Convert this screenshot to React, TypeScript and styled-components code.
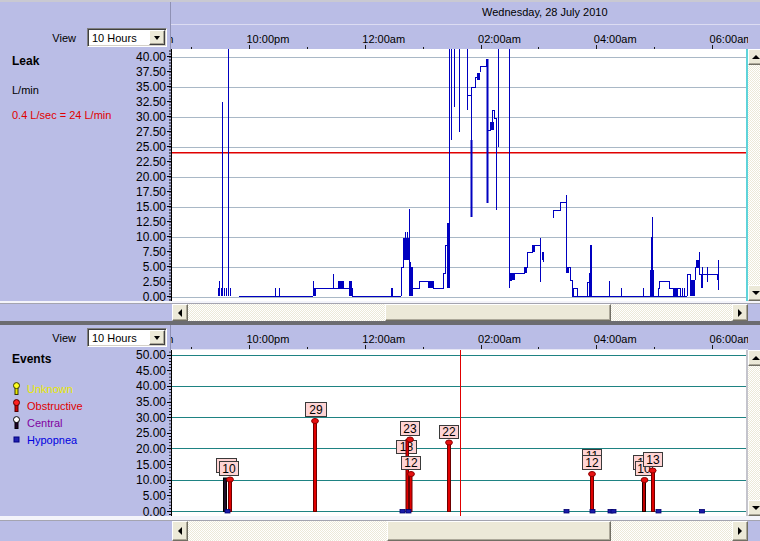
import React from "react";
import styled, { createGlobalStyle } from "styled-components";

const LAV = "#BABDE6";
const FACE = "#ECE9D8";
const CHECKER = `repeating-conic-gradient(${FACE} 0 25%, #ffffff 0 50%) 0 0 / 2px 2px`;
const FONT = `"Liberation Sans", Arial, sans-serif`;

const GlobalStyle = createGlobalStyle`
  html, body { margin: 0; padding: 0; background: ${LAV}; overflow: hidden; }
  #root { width: 760px; height: 541px; }
`;

const Screen = styled.div`
  width: 760px;
  height: 541px;
  overflow: hidden;
  display: flex;
  flex-direction: column;
  background: ${LAV};
  font-family: ${FONT};
  font-size: 11px;
  color: #000;
`;

const Strip = styled.div<{ $h: number; $c: string }>`
  flex: 0 0 ${(p) => p.$h}px;
  background: ${(p) => p.$c};
`;

const Header = styled.div<{ $h: number }>`
  flex: 0 0 ${(p) => p.$h}px;
  display: grid;
  grid-template-columns: 171px 1fr;
  min-height: 0;
`;

const ViewCell = styled.div`
  border-right: 1px solid #8f91b4;
  display: flex;
  align-items: flex-end;
  justify-content: flex-end;
  padding: 0 3px 3px 0;
`;

const ViewRow = styled.div`
  display: flex;
  align-items: center;
  gap: 11px;
`;

const Select = styled.div`
  width: 80px;
  height: 19px;
  box-sizing: border-box;
  background: #fff;
  border: 1px solid;
  border-color: #808080 #ffffff #ffffff #808080;
  box-shadow: inset 1px 1px 0 #404040, inset -1px -1px 0 #d4d0c8;
  display: flex;
  align-items: center;
  justify-content: space-between;
  padding: 1px 1px 1px 4px;
  font-size: 11px;
`;

const DropBtn = styled.div`
  width: 16px;
  height: 15px;
  box-sizing: border-box;
  background: ${FACE};
  border: 1px solid;
  border-color: #ffffff #404040 #404040 #ffffff;
  box-shadow: inset -1px -1px 0 #aca899;
  display: flex;
  align-items: center;
  justify-content: center;
  &::before {
    content: "";
    border-left: 3.5px solid transparent;
    border-right: 3.5px solid transparent;
    border-top: 4px solid #000;
  }
`;

const AxisHead = styled.div`
  display: flex;
  flex-direction: column;
  min-width: 0;
`;

const DateRow = styled.div`
  flex: 0 0 23px;
  box-sizing: border-box;
  border-bottom: 1px solid #dcdcf2;
  padding-left: 311px;
  line-height: 21px;
  white-space: nowrap;
`;

const TimeRow = styled.div`
  flex: 1 1 auto;
  box-sizing: border-box;
  border-bottom: 1px solid #e6e6f4;
  margin-right: 12px;
  overflow: hidden;
  display: flex;
`;

const TimeTrack = styled.div`
  display: flex;
  margin-left: -37.8px;
`;

const HourCell = styled.div`
  flex: 0 0 57.9px;
  display: flex;
  flex-direction: column;
  align-items: flex-start;
  padding-top: 8px;
  box-sizing: border-box;
`;

const HourLabel = styled.span`
  height: 12px;
  line-height: 12px;
  margin-left: -2.5px;
  white-space: nowrap;
`;

const HourTick = styled.span<{ $major: boolean }>`
  margin-top: auto;
  width: 1px;
  height: ${(p) => (p.$major ? 4 : 2)}px;
  background: #1a1a1a;
`;

const Body = styled.div<{ $h: number }>`
  flex: 0 0 ${(p) => p.$h}px;
  display: grid;
  grid-template-columns: 130px 42px 576px 1fr;
  overflow: hidden;
`;

const Info = styled.div<{ $pt: number }>`
  padding: ${(p) => p.$pt}px 0 0 12px;
  display: flex;
  flex-direction: column;
`;

const Title = styled.div`
  font-weight: bold;
  font-size: 12px;
  line-height: 14px;
`;

const InfoLine = styled.div<{ $color?: string; $mt: number }>`
  margin-top: ${(p) => p.$mt}px;
  color: ${(p) => p.$color || "#000"};
  line-height: 14px;
  white-space: nowrap;
`;

const Legend = styled.div`
  margin-top: 14px;
  display: flex;
  flex-direction: column;
`;

const LegendRow = styled.div<{ $color: string }>`
  height: 17px;
  display: flex;
  align-items: center;
  gap: 6px;
  color: ${(p) => p.$color};
  svg { display: block; flex: 0 0 auto; }
`;

const Axis = styled.div`
  border-right: 1px solid #000;
  overflow: hidden;
`;

const AxisList = styled.div<{ $offset: number; $minor: number; $phase: number }>`
  margin-top: ${(p) => p.$offset}px;
  background-image: linear-gradient(to bottom, #000 0 1px, transparent 1px);
  background-size: 2px ${(p) => p.$minor}px;
  background-repeat: repeat-y;
  background-position: right 0 top ${(p) => p.$phase}px;
`;

const AxisLabel = styled.div<{ $slot: number }>`
  height: ${(p) => p.$slot}px;
  display: flex;
  align-items: center;
  justify-content: flex-end;
  gap: 1px;
  font-size: 12px;
  line-height: 1;
  &::after {
    content: "";
    width: 4px;
    height: 1px;
    background: #000;
  }
`;

const ChartBox = styled.div<{ $edge: string }>`
  background: #fff;
  border-right: 2px solid ${(p) => p.$edge};
  overflow: hidden;
  svg { display: block; }
`;

const VScroll = styled.div`
  overflow: hidden;
  display: flex;
  flex-direction: column;
  justify-content: space-between;
  background: ${CHECKER};
`;

type Dir = "left" | "right" | "up" | "down";

const arrowCss = (d: Dir) => {
  switch (d) {
    case "left":
      return "border-top: 4px solid transparent; border-bottom: 4px solid transparent; border-right: 4px solid #000;";
    case "right":
      return "border-top: 4px solid transparent; border-bottom: 4px solid transparent; border-left: 4px solid #000;";
    case "up":
      return "border-left: 4px solid transparent; border-right: 4px solid transparent; border-bottom: 4px solid #000;";
    default:
      return "border-left: 4px solid transparent; border-right: 4px solid transparent; border-top: 4px solid #000;";
  }
};

const ArrowBtn = styled.div<{ $dir: Dir; $w: number; $h: number }>`
  flex: 0 0 auto;
  width: ${(p) => p.$w}px;
  height: ${(p) => p.$h}px;
  box-sizing: border-box;
  background: ${FACE};
  border: 1px solid;
  border-color: #ffffff #716f64 #716f64 #ffffff;
  box-shadow: inset -1px -1px 0 #aca899;
  display: flex;
  align-items: center;
  justify-content: center;
  &::before {
    content: "";
    ${(p) => arrowCss(p.$dir)}
  }
`;

const HScrollRow = styled.div<{ $h: number }>`
  flex: 0 0 ${(p) => p.$h}px;
  display: grid;
  grid-template-columns: 172px 576px 1fr;
  overflow: hidden;
`;

const HTrack = styled.div`
  display: flex;
  align-items: stretch;
  background: ${CHECKER};
`;

const Thumb = styled.div<{ $left: number; $w: number }>`
  margin-left: ${(p) => p.$left}px;
  width: ${(p) => p.$w}px;
  box-sizing: border-box;
  background: ${FACE};
  border: 1px solid;
  border-color: #ffffff #716f64 #716f64 #ffffff;
  box-shadow: inset -1px -1px 0 #aca899;
`;

const Spacer = styled.div`
  flex: 1 1 auto;
`;

/* ---------- time axis ---------- */
const HOURS = ["08:00pm", "", "10:00pm", "", "12:00am", "", "02:00am", "", "04:00am", "", "06:00am"];

const TimeAxis = () => (
  <TimeRow>
    <TimeTrack>
      {HOURS.map((h, i) => (
        <HourCell key={i}>
          <HourLabel>{h}</HourLabel>
          <HourTick $major={i % 2 === 0} />
        </HourCell>
      ))}
    </TimeTrack>
  </TimeRow>
);

const ViewPicker = () => (
  <ViewCell>
    <ViewRow>
      <span>View</span>
      <Select>
        <span>10 Hours</span>
        <DropBtn />
      </Select>
    </ViewRow>
  </ViewCell>
);

/* ---------- leak chart ---------- */
const LEAK_LABELS = Array.from({ length: 17 }, (_, i) => (40 - i * 2.5).toFixed(2));
const EVENT_LABELS = Array.from({ length: 11 }, (_, i) => (50 - i * 5).toFixed(2));

const LEAK_PATH = [
  "M218 296V288 M219.5 296V281 M221 296V288 M222.5 296V102 M224.5 296V288 M226 296V288 M228.5 296V49 M230 296V288",
  "M239 296H313 M275 296V288 M279 296V288",
  "M313 296V281 M313 288H333V274 M333 288H352V296",
  "M352 296H401 M391 296V288H392V296",
  "M401 296V267H403V238 M405 250V232 M407 260V232 M409 296V209 M410.5 296V262 M412 296V268",
  "M413 288H419V281H433V288H443V273H445V245H447V223 M449.5 288V49",
  "M451.5 49V140 M454 49V107 M459.5 49V132 M467.5 49V110 M467 95H471.5V217 M471.5 95V87H475V77H478 M480 72V66H486V59H487.5",
  "M488 130H490V122H492V110H494V118H496V130V210 M498.5 49V147 M509.5 49V288",
  "M509 288V280H511V273H524V267H527V252H532V245H540V238 M540.5 238V282 M542.5 252V260 M543.5 252V262",
  "M553 218V210H560V202H566V195 M566.5 195V267H570V280H572V296 M573 296V288H577V296",
  "M572 296H687 M587 296V282H590V245 M591 296V245 M609 296V281 M621 296V288 M643 296V288",
  "M650 296V270 M651.5 296V237 M652.5 296V217 M653.5 296V270",
  "M658 296V288H659V281H669V288H680V296 M682 296V288 M684 296V288",
  "M687 296V274H690V280 M695 280V267H699V252V274H718 M701 274V288 M702 288V267 M707 267V282 M717 274V280 M718.5 260V290",
].join(" ");

const LEAK_BLOCKS: [number, number, number, number][] = [
  [313, 288, 316, 296],
  [338, 281, 344, 288],
  [349, 281, 352, 296],
  [403, 238, 409, 260],
  [409, 267, 413, 296],
  [428, 281, 433, 288],
  [447, 223, 449, 288],
  [470.5, 140, 472.5, 217],
  [477, 73, 480, 80],
  [486.5, 59, 488.5, 203],
  [490, 122, 494, 130],
  [510, 273, 515, 280],
  [524, 267, 527, 273],
  [532, 245, 535, 252],
  [566, 267, 569, 273],
  [589, 273, 592, 296],
  [651, 270, 653, 296],
  [673, 288, 678, 296],
  [690, 280, 695, 296],
  [696, 260, 699, 267],
];

const LEAK_GRID = [57, 87, 117, 147, 177, 207, 237, 267, 297];

const LeakChart = () => (
  <svg width={574} height={252} viewBox="172 49 574 252">
    {LEAK_GRID.map((y) => (
      <line key={y} x1={172} x2={746} y1={y} y2={y} stroke="#A9B8C6" strokeWidth={1} shapeRendering="crispEdges" />
    ))}
    <line x1={172} x2={746} y1={152.7} y2={152.7} stroke="#E00000" strokeWidth={1.6} />
    <path d={LEAK_PATH} fill="none" stroke="#0000C0" strokeWidth={1} shapeRendering="crispEdges" />
    {LEAK_BLOCKS.map(([x1, y1, x2, y2], i) => (
      <rect key={i} x={x1} y={y1} width={x2 - x1} height={y2 - y1} fill="#0000C0" />
    ))}
  </svg>
);

/* ---------- events chart ---------- */
const BASE = 511.5;
const EV_GRID = [355.5, 386.5, 417.5, 448.5, 480.5, 511.5];

const Tag = ({ x, y, w, h = 14, t }: { x: number; y: number; w: number; h?: number; t: string }) => (
  <g>
    <rect x={x} y={y} width={w} height={h} fill="#FFD4D4" stroke="#3a3a3a" strokeWidth={1} />
    <text x={x + w / 2} y={y + h - 2.6} fontSize={12} textAnchor="middle" fontFamily={FONT} fill="#000">
      {t}
    </text>
  </g>
);

const Stem = ({ x, top, w = 3, fill = "#E00000", stroke = "#6E0000" }: { x: number; top: number; w?: number; fill?: string; stroke?: string }) => (
  <rect x={x} y={top} width={w} height={BASE - top} fill={fill} stroke={stroke} strokeWidth={1} />
);

const Head = ({ cx, cy }: { cx: number; cy: number }) => (
  <ellipse cx={cx} cy={cy} rx={3.4} ry={2.5} fill="#E81010" stroke="#8A0000" strokeWidth={1} />
);

const Hyp = ({ x }: { x: number }) => (
  <rect x={x} y={509.5} width={5} height={3.5} fill="#1A1AA8" stroke="#000070" strokeWidth={0.8} />
);

const EventsChart = () => (
  <svg width={574} height={166} viewBox="172 350 574 166">
    {EV_GRID.map((y) => (
      <line key={y} x1={172} x2={746} y1={y} y2={y} stroke="#1E8282" strokeWidth={1} shapeRendering="crispEdges" />
    ))}
    <line x1={460.5} x2={460.5} y1={350} y2={516} stroke="#E00000" strokeWidth={1} />

    {/* cluster near 10:30pm */}
    <Tag x={216.5} y={458.5} w={20} t="11" />
    <Tag x={219.5} y={461.5} w={19} t="10" />
    <Stem x={223.5} top={478} fill="#20102A" stroke="#000" />
    <Stem x={228.5} top={480} />
    <Head cx={230} cy={479.5} />

    {/* 29 */}
    <Tag x={305.5} y={402.5} w={21} t="29" />
    <Stem x={313.5} top={421} />
    <Head cx={315} cy={421} />

    {/* cluster near 12:40am */}
    <Tag x={396.5} y={440.5} w={20} h={13} t="18" />
    <Tag x={400.5} y={421.5} w={19} t="23" />
    <Stem x={406} top={439.5} w={2.5} />
    <Head cx={410} cy={439.5} />
    <Tag x={401.5} y={456.5} w={19} h={13} t="12" />
    <Stem x={409.5} top={474} w={2.5} />
    <Head cx={411} cy={474} />

    {/* 22 */}
    <Tag x={439.5} y={425.5} w={19} h={13} t="22" />
    <Stem x={447.5} top={442.5} />
    <Head cx={449} cy={442.5} />

    {/* 12 near 4am */}
    <Tag x={582.5} y={449.5} w={19} h={13} t="11" />
    <Tag x={582.5} y={455.5} w={19} t="12" />
    <Stem x={590.5} top={474} />
    <Head cx={592} cy={474} />

    {/* 10 and 13 near 5am */}
    <Tag x={633.5} y={455.5} w={14} t="1" />
    <Tag x={635.5} y={461.5} w={17} t="10" />
    <Stem x={642.5} top={480.4} fill="#C00000" stroke="#200000" />
    <Head cx={644.5} cy={480} />
    <Tag x={643.5} y={452.5} w={19} t="13" />
    <Stem x={651.5} top={471} />
    <Head cx={652.7} cy={470.5} />

    {[225, 400, 406, 564, 590, 608, 611, 656, 699.5].map((x) => (
      <Hyp key={x} x={x} />
    ))}
  </svg>
);

/* ---------- legend icons ---------- */
const PinIcon = ({ head, stem, edge }: { head: string; stem: string; edge: string }) => (
  <svg width="9" height="13" viewBox="0 0 9 13">
    <rect x="3" y="5" width="3" height="7.5" fill={stem} stroke={edge} strokeWidth="1" />
    <circle cx="4.5" cy="3.6" r="3" fill={head} stroke={edge} strokeWidth="1" />
  </svg>
);

const SquareIcon = () => (
  <svg width="9" height="13" viewBox="0 0 9 13">
    <rect x="2" y="4" width="5" height="5" fill="#2020B0" stroke="#000080" strokeWidth="1" />
  </svg>
);

export default function App() {
  return (
    <>
      <GlobalStyle />
      <Screen>
        <Strip $h={2} $c="#c9c9d2" />

        {/* ===== Leak panel ===== */}
        <Header $h={47}>
          <ViewPicker />
          <AxisHead>
            <DateRow>Wednesday, 28 July 2010</DateRow>
            <TimeAxis />
          </AxisHead>
        </Header>

        <Body $h={252}>
          <Info $pt={5}>
            <Title>Leak</Title>
            <InfoLine $mt={15}>L/min</InfoLine>
            <InfoLine $mt={11} $color="#E00000">
              0.4 L/sec = 24 L/min
            </InfoLine>
          </Info>
          <Axis>
            <AxisList $offset={0.2} $minor={3} $phase={1.5}>
              {LEAK_LABELS.map((l) => (
                <AxisLabel key={l} $slot={15}>
                  {l}
                </AxisLabel>
              ))}
            </AxisList>
          </Axis>
          <ChartBox $edge="#5ED3DA">
            <LeakChart />
          </ChartBox>
          <VScroll>
            <ArrowBtn $dir="up" $w={16} $h={16} />
            <ArrowBtn $dir="down" $w={16} $h={16} />
          </VScroll>
        </Body>
        <Strip $h={2} $c="#f4f4fa" />
        <Strip $h={1} $c="#a4a4b0" />

        <HScrollRow $h={17}>
          <div />
          <HTrack>
            <ArrowBtn $dir="left" $w={16} $h={17} />
            <Thumb $left={197} $w={226} />
            <Spacer />
            <ArrowBtn $dir="right" $w={16} $h={17} />
          </HTrack>
          <div />
        </HScrollRow>

        <Strip $h={4} $c="#6c6c70" />

        {/* ===== Events panel ===== */}
        <Header $h={25}>
          <ViewPicker />
          <AxisHead>
            <TimeAxis />
          </AxisHead>
        </Header>

        <Body $h={166}>
          <Info $pt={2}>
            <Title>Events</Title>
            <Legend>
              <LegendRow $color="#E8E800">
                <PinIcon head="#FFFF20" stem="#E8E800" edge="#3a3a00" />
                Unknown
              </LegendRow>
              <LegendRow $color="#E00000">
                <PinIcon head="#FF2020" stem="#D00000" edge="#500000" />
                Obstructive
              </LegendRow>
              <LegendRow $color="#8000A0">
                <PinIcon head="#FFFFFF" stem="#200028" edge="#000000" />
                Central
              </LegendRow>
              <LegendRow $color="#0000E0">
                <SquareIcon />
                Hypopnea
              </LegendRow>
            </Legend>
          </Info>
          <Axis>
            <AxisList $offset={-2.8} $minor={3.134} $phase={1.57}>
              {EVENT_LABELS.map((l) => (
                <AxisLabel key={l} $slot={15.67}>
                  {l}
                </AxisLabel>
              ))}
            </AxisList>
          </Axis>
          <ChartBox $edge="#c4c4cc">
            <EventsChart />
          </ChartBox>
          <VScroll>
            <ArrowBtn $dir="up" $w={16} $h={16} />
            <ArrowBtn $dir="down" $w={16} $h={16} />
          </VScroll>
        </Body>
        <Strip $h={4} $c="#f4f4fa" />
        <Strip $h={1} $c="#a4a4b0" />

        <HScrollRow $h={20}>
          <div />
          <HTrack>
            <ArrowBtn $dir="left" $w={16} $h={20} />
            <Thumb $left={199} $w={224} />
            <Spacer />
            <ArrowBtn $dir="right" $w={16} $h={20} />
          </HTrack>
          <div />
        </HScrollRow>
      </Screen>
    </>
  );
}
